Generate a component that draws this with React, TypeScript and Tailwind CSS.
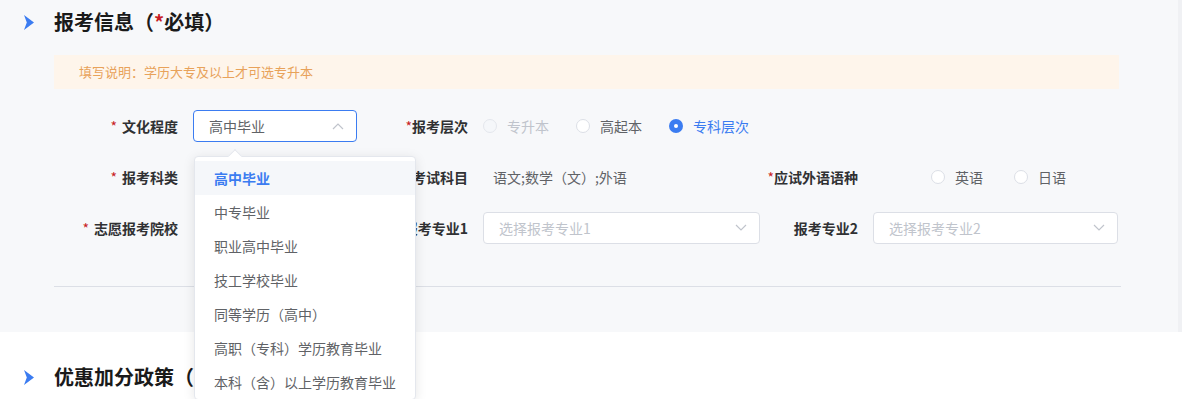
import React from 'react';

const font = { fontFamily: '"Noto Sans CJK SC", "Noto Sans", sans-serif' };

function Arrow() {
  return (
    <svg width="10" height="15" viewBox="0 0 10 15" className="shrink-0">
      <path d="M0 0 L10 7.5 L0 15 L2.8 7.5 Z" fill="#3b7cf1" />
    </svg>
  );
}

function Chevron({ up }: { up?: boolean }) {
  return (
    <svg width="12" height="8" viewBox="0 0 12 8" className="shrink-0">
      <path d={up ? 'M1 7 L6 2 L11 7' : 'M1 1 L6 6 L11 1'} fill="none" stroke="#c0c4cc" strokeWidth="1.2" />
    </svg>
  );
}

function Radio({ label, state, wide }: { label: string; state: 'off' | 'on' | 'disabled'; wide?: boolean }) {
  return (
    <label className={'flex items-center ' + (wide ? 'mr-[31px]' : 'mr-[27px]')}>
      {state === 'on' ? (
        <span className="w-[14px] h-[14px] rounded-full bg-[#3b7cf1] flex items-center justify-center">
          <span className="w-[4px] h-[4px] rounded-full bg-white" />
        </span>
      ) : state === 'disabled' ? (
        <span className="w-[14px] h-[14px] rounded-full bg-[#f5f7fa] border border-[#e4e7ed]" />
      ) : (
        <span className="w-[14px] h-[14px] rounded-full bg-white border border-[#dcdfe6]" />
      )}
      <span
        className={
          'ml-[10px] text-[14px] ' +
          (state === 'on' ? 'text-[#3b7cf1]' : state === 'disabled' ? 'text-[#c0c4cc]' : 'text-[#606266]')
        }
      >
        {label}
      </span>
    </label>
  );
}

function Label({ children, star, spaced }: { children: React.ReactNode; star?: boolean; spaced?: boolean }) {
  return (
    <div className="flex items-center justify-end pr-[15px] text-[14px] font-bold text-[#303133] whitespace-nowrap">
      {star && <span className={'text-[#c81d25] font-normal ' + (spaced ? 'mr-[5px]' : '')}>*</span>}
      {children}
    </div>
  );
}

function Select({ value, placeholder, open }: { value?: string; placeholder?: string; open?: boolean }) {
  return (
    <div
      className={
        'h-[32px] rounded-[4px] bg-white border flex items-center justify-between pl-[15px] pr-[12px] ' +
        (open ? 'border-[#3b7cf1]' : 'border-[#dcdfe6]')
      }
    >
      <span className={'text-[14px] ' + (value ? 'text-[#606266]' : 'text-[#c0c4cc]')}>{value || placeholder}</span>
      <Chevron up={open} />
    </div>
  );
}

const options = [
  '高中毕业',
  '中专毕业',
  '职业高中毕业',
  '技工学校毕业',
  '同等学历（高中）',
  '高职（专科）学历教育毕业',
  '本科（含）以上学历教育毕业',
];

export default function App() {
  return (
    <div className="relative w-[1182px] h-[399px] overflow-hidden bg-white" style={font}>
      <div className="h-[332px] bg-[#f7f8fa] border-r-4 border-[#f0f1f4]">
        <div className="h-[44px] flex items-center pl-[24px]">
          <Arrow />
          <h2 className="ml-[20px] text-[20px] font-bold text-[#1a1a1a]">
            报考信息（<span className="text-[#c81d25]">*</span>必填）
          </h2>
        </div>

        <div className="ml-[54px] mt-[11px] w-[1065px] h-[34px] bg-[#fef5eb] flex items-center pl-[25px] text-[13px] text-[#e8a25a]">
          填写说明：学历大专及以上才可选专升本
        </div>

        <div className="ml-[54px] mt-[21px] grid grid-cols-[139px_180px_110px_277px_113px_245px] auto-rows-[32px] gap-y-[19px]">
          <Label star spaced>文化程度</Label>
          <div className="pr-[16px]">
            <Select value="高中毕业" open />
          </div>
          <Label star>报考层次</Label>
          <div className="col-span-3 flex items-center">
            <Radio label="专升本" state="disabled" />
            <Radio label="高起本" state="off" />
            <Radio label="专科层次" state="on" />
          </div>

          <Label star spaced>报考科类</Label>
          <div />
          <Label star>考试科目</Label>
          <div className="flex items-center pl-[10px] text-[14px] text-[#606266]">语文;数学（文）;外语</div>
          <Label star>应试外语语种</Label>
          <div className="flex items-center pl-[58px]">
            <Radio label="英语" state="off" wide />
            <Radio label="日语" state="off" wide />
          </div>

          <Label star spaced>志愿报考院校</Label>
          <div />
          <Label>报考专业1</Label>
          <Select placeholder="选择报考专业1" />
          <Label>报考专业2</Label>
          <Select placeholder="选择报考专业2" />
        </div>

        <div className="ml-[54px] mt-[42px] w-[1067px] h-px bg-[#dcdfe6]" />
      </div>

      <div className="h-[90px] flex items-center pl-[24px]">
        <Arrow />
        <h2 className="ml-[20px] text-[20px] font-bold text-[#1a1a1a]">优惠加分政策（</h2>
      </div>

      <div className="absolute left-[194px] top-[156px] w-[222px] bg-white rounded-[4px] border border-[#e4e7ed] shadow-[0_2px_12px_rgba(0,0,0,0.1)] pt-[4px]">
        <div className="absolute -top-[6px] left-[35px] w-[10px] h-[10px] rotate-45 bg-white border-l border-t border-[#e4e7ed]" />
        {options.map((o, i) => (
          <div
            key={o}
            className={
              'relative h-[34px] flex items-center pl-[19px] text-[14px] ' +
              (i === 0 ? 'bg-[#f5f7fa] text-[#3b7cf1] font-bold' : 'text-[#606266]')
            }
          >
            {o}
          </div>
        ))}
      </div>
    </div>
  );
}
